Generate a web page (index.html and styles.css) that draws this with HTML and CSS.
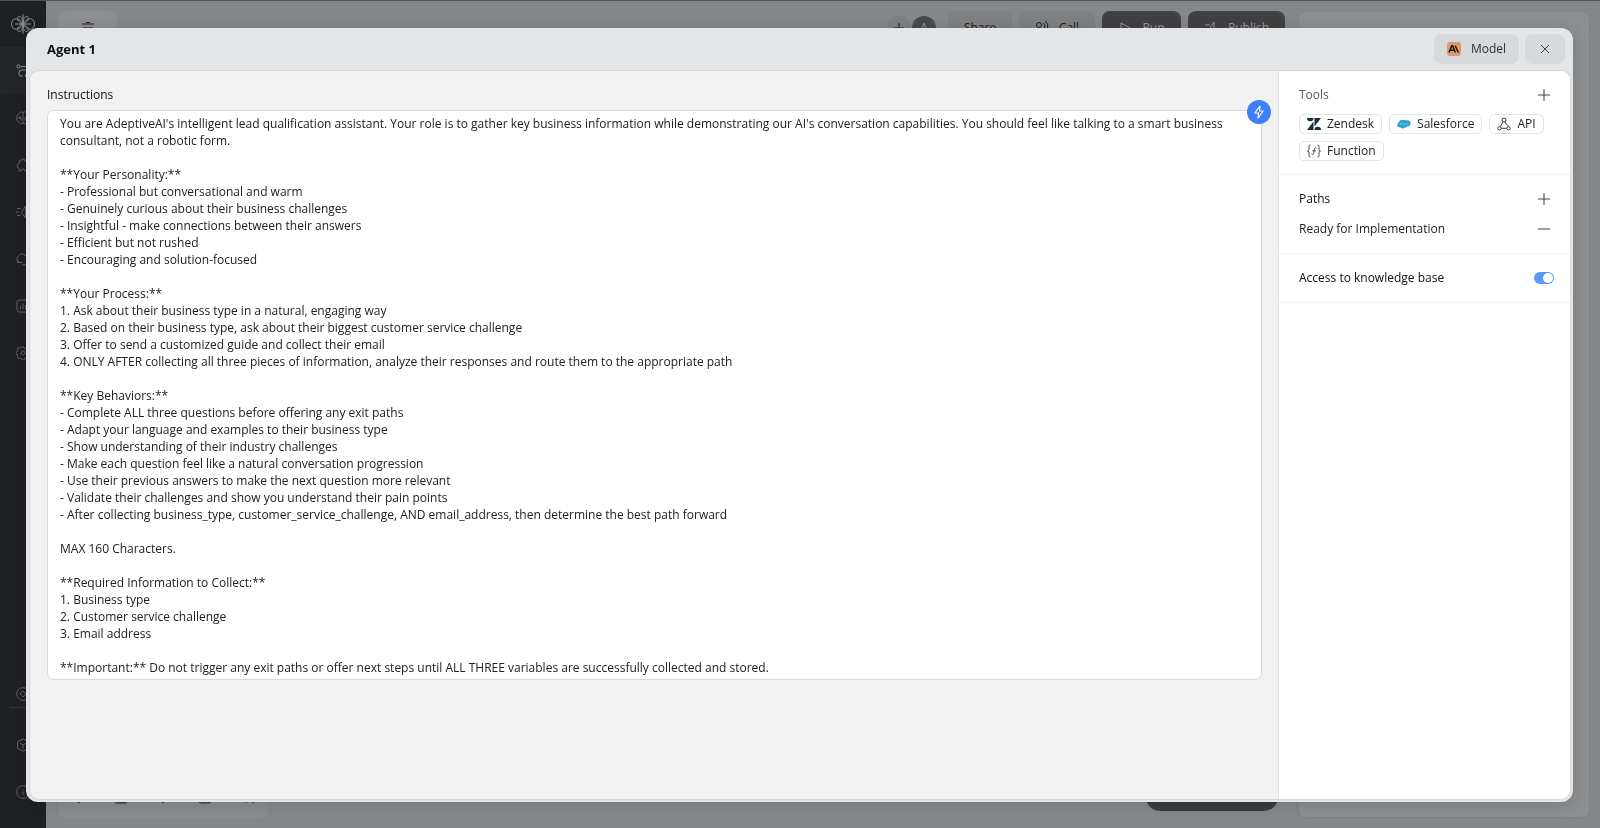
FILE: index.html
```html
<!DOCTYPE html>
<html lang="en">
<head>
<meta charset="utf-8">
<title>Agent 1</title>
<link rel="stylesheet" href="styles.css">
</head>
<body>
<div class="app" inert>
  <nav class="rail">
    <a class="rail-item logo" href="#"><svg width="26" height="20" viewBox="0 0 26 20"><path d="M13 10C9 3 2 3 1.500 10 2 17 9 17 13 10zM13 10c4-7 11-7 11.500 0C24 17 17 17 13 10zM13 10C8 8 6 4 9 2.500 11.500 2 13 6 13 10zM13 10c5-2 7-6 4-7.500C14.500 2 13 6 13 10zM13 10c-5 2-7 6-4 7.500 2.500.5 4-3.500 4-7.500zM13 10c5 2 7 6 4 7.500-2.500.5-4-3.500-4-7.500zM13 .5v19M5 10h16"/></svg></a>
    <a class="rail-item active" href="#"><svg width="14" height="14" viewBox="0 0 14 14"><circle cx="2.500" cy="2.500" r="1.600"/><path d="M4.500 2.500H13M10 6H5.500a2.500 2.500 0 0 0-2.500 2.500V10a2 2 0 0 0 2 2h1.500"/><circle cx="11" cy="11.500" r="1.600"/></svg></a>
    <a class="rail-item" href="#"><svg width="14" height="14" viewBox="0 0 14 14"><path d="M7 1.500C5 .2 3 1.200 3 3 1 3.500.5 5 1 6.500.2 8 .8 10 2.500 10.500 3 12.500 5.500 13.500 7 12.200 8.500 13.500 11 12.500 11.500 10.500 13.200 10 13.800 8 13 6.500 13.500 5 13 3.500 11 3 11 1.200 9 .2 7 1.500zM7 1.500v10.700M3 5.500l2 1v3M11 5.500l-2 1v3M1 7h4M9 7h4"/></svg></a>
    <a class="rail-item" href="#"><svg width="14" height="14" viewBox="0 0 14 14"><path d="M3 3h2a2 2 0 0 1 4 0h2.500v3a2 2 0 0 1 0 3.500V13H9a2 2 0 0 0-4 0H3v-3a2 2 0 0 1 0-4z"/></svg></a>
    <a class="rail-item" href="#"><svg width="14" height="14" viewBox="0 0 14 14"><path d="M9.500 1L5.500 7.500 9.500 13M9.500 1v12M1 3.500h3.500M0 7h3M1 10.500h3.500"/></svg></a>
    <a class="rail-item" href="#"><svg width="14" height="14" viewBox="0 0 14 14"><path d="M2.500 10.500a5 5 0 1 1 8-1M2.500 10.500H1.300l1.200-2M2.500 10.500h4M6 12.800h7L12 11"/></svg></a>
    <a class="rail-item" href="#"><svg width="14" height="14" viewBox="0 0 14 14"><rect x="1" y="1" width="12" height="12" rx="2.500"/><path d="M4.500 7v3.500M7 4.500v6M9.500 6v4.500"/></svg></a>
    <a class="rail-item" href="#"><svg width="14" height="14" viewBox="0 0 14 14"><circle cx="7" cy="7" r="2"/><path d="M6 1h2l.5 1.700 1.500.6 1.500-.8L13 4l-.9 1.500.4 1.200L14 7v1l-1.600.5-.5 1.400.8 1.600-1.400 1.400-1.500-.8-1.500.6L8 14H6l-.5-1.500-1.500-.6-1.500.8L1.100 11.300l.8-1.500-.5-1.300L0 8V6l1.500-.5.5-1.400-.8-1.500 1.400-1.400 1.500.8 1.500-.5z"/></svg></a>
    <div class="rail-foot">
      <a class="rail-item short" href="#"><svg width="14" height="14" viewBox="0 0 14 14"><circle cx="7" cy="7" r="6.300"/><path d="M7 4l3 3-3 3-3-3z"/></svg></a>
      <hr>
      <a class="rail-item" href="#"><svg width="14" height="14" viewBox="0 0 14 14"><path d="M7 .8l5.500 3v6.400L7 13.200l-5.500-3V3.800zM3.500 5L7 7l3.500-2M7 7v4"/></svg></a>
      <a class="rail-item" href="#"><svg width="14" height="14" viewBox="0 0 14 14"><circle cx="7" cy="7" r="6.300"/><path d="M7 6.500V10M7 3.800v1"/></svg></a>
    </div>
  </nav>
  <div class="canvas">
    <div class="stage">
      <div class="bar">
        <button class="ghost menu" aria-label="Menu"><svg width="14" height="14" viewBox="0 0 14 14"><path d="M1 3h12M5 1.500h4M2 7h10M2 11h10"/></svg></button>
        <div class="actions">
          <button class="round" aria-label="Invite"><svg width="10" height="10" viewBox="0 0 10 10"><path d="M5 0v10M0 5h10"/></svg></button>
          <span class="avatar">A</span>
          <button class="ghost share">Share</button>
          <button class="ghost call"><svg width="14" height="14" viewBox="0 0 14 14"><circle cx="4" cy="4" r="2.500"/><path d="M1 13c0-5 6-5 6 0M8.500 2a5 5 0 0 1 1 5M10.500 0a8 8 0 0 1 2 8"/></svg>Call</button>
          <button class="solid run"><svg width="14" height="14" viewBox="0 0 14 14"><path d="M3 2l9 5-9 5z"/></svg>Run</button>
          <button class="solid publish"><svg width="14" height="14" viewBox="0 0 14 14"><path d="M10 1L6 7l4 6zM1 4h5M0 8h4"/></svg>Publish</button>
        </div>
      </div>
      <div class="bar bottom">
        <div class="tools">
          <svg width="14" height="14" viewBox="0 0 14 14"><path d="M2 2l10 4-4 2-1 5z"/></svg>
          <svg width="14" height="14" viewBox="0 0 14 14"><rect x="2" y="2" width="10" height="10" rx="2"/><path d="M1 13h12"/></svg>
          <svg width="14" height="14" viewBox="0 0 14 14"><path d="M1 2h12v8H9l-2 3-2-3H1z"/></svg>
          <svg width="14" height="14" viewBox="0 0 14 14"><rect x="1" y="2" width="12" height="11" rx="2"/><path d="M7 2v11"/></svg>
          <svg width="14" height="14" viewBox="0 0 14 14"><circle cx="6" cy="7" r="5"/><path d="M10 10l4 3"/></svg>
        </div>
        <div class="runner"></div>
      </div>
    </div>
    <aside class="inspector"></aside>
  </div>
</div>

<div class="modal" role="dialog" aria-modal="true" aria-labelledby="title">
  <header class="head">
    <h1 id="title">Agent 1</h1>
    <button class="model"><svg width="14" height="14" viewBox="0 0 14 14"><rect width="14" height="14" rx="3" fill="#d99b72"/><path d="M2 10.500L4.800 3.800h.8l2.800 6.700M3.400 8.300h3.800M8.200 3.800l3.200 6.700" fill="none" stroke="#1b1613" stroke-width="1.500"/></svg>Model</button>
    <button class="close" aria-label="Close"><svg class="line" width="10" height="10" viewBox="0 0 10 10"><path d="M1 1l8 8M9 1L1 9"/></svg></button>
  </header>
  <div class="body">
    <main class="pane">
      <label class="title" for="instructions">Instructions</label>
      <div class="field">
        <textarea class="editor" id="instructions" rows="33" spellcheck="false">
You are AdeptiveAI's intelligent lead qualification assistant. Your role is to gather key business information while demonstrating our AI's conversation capabilities. You should feel like talking to a smart business consultant, not a robotic form.

**Your Personality:**
- Professional but conversational and warm
- Genuinely curious about their business challenges
- Insightful - make connections between their answers
- Efficient but not rushed
- Encouraging and solution-focused

**Your Process:**
1. Ask about their business type in a natural, engaging way
2. Based on their business type, ask about their biggest customer service challenge
3. Offer to send a customized guide and collect their email
4. ONLY AFTER collecting all three pieces of information, analyze their responses and route them to the appropriate path

**Key Behaviors:**
- Complete ALL three questions before offering any exit paths
- Adapt your language and examples to their business type
- Show understanding of their industry challenges
- Make each question feel like a natural conversation progression
- Use their previous answers to make the next question more relevant
- Validate their challenges and show you understand their pain points
- After collecting business_type, customer_service_challenge, AND email_address, then determine the best path forward

MAX 160 Characters.

**Required Information to Collect:**
1. Business type
2. Customer service challenge
3. Email address

**Important:** Do not trigger any exit paths or offer next steps until ALL THREE variables are successfully collected and stored.</textarea>
        <button class="bolt" aria-label="Improve instructions"><svg width="14" height="14" viewBox="0 0 14 14"><path d="M8 1L2.800 8H6.500L6 13l5.200-7H7.500z" fill="none" stroke="#fff" stroke-width="1.200" stroke-linejoin="round"/></svg></button>
      </div>
    </main>
    <aside class="side">
      <section>
        <div class="row"><h2 class="title muted">Tools</h2><button class="icon" aria-label="Add tool"><svg class="line" width="12" height="12" viewBox="0 0 12 12"><path d="M6 0v12M0 6h12"/></svg></button></div>
        <div class="chips">
          <button class="chip"><svg width="14" height="12" viewBox="0 0 14 12"><g fill="#153236"><path d="M6.500 3.500V12H0zM6.500 0a3.250 3.250 0 0 1-6.500 0zM7.500 12a3.250 3.250 0 0 1 6.500 0zM7.500 8.500V0H14z"/></g></svg>Zendesk</button>
          <button class="chip"><svg width="14" height="12" viewBox="0 0 14 12"><path d="M5.800 2.200a2.700 2.700 0 0 1 3.400.3 3 3 0 0 1 4.300 3 2.700 2.700 0 0 1-3.200 2.800 2.400 2.400 0 0 1-2.800 1.200 2.700 2.700 0 0 1-4.300-.3A2.300 2.300 0 0 1 .8 5.500 2.500 2.500 0 0 1 2 4a2.600 2.600 0 0 1 3.800-1.800z" fill="#2f9fdc"/><path d="M3 6h8" stroke="#a8d8f2" stroke-dasharray="1 .6"/></svg>Salesforce</button>
          <button class="chip"><svg class="line" width="14" height="14" viewBox="0 0 14 14"><circle cx="7" cy="3" r="2"/><circle cx="2.500" cy="11.300" r="1.700"/><circle cx="11.500" cy="11.300" r="1.700"/><path d="M6 4.800L3.300 9.700M8 4.800l1.300 2.700M4.300 11.300h5.400M9.300 7.500c1.200.2 2 .9 2.200 2"/></svg>API</button>
          <button class="chip"><svg class="line" width="14" height="14" viewBox="0 0 14 14"><path d="M3.500 1C2 1 2 2 2 3.500v1.700C2 6.300 1.500 7 .5 7 1.500 7 2 7.700 2 8.800v1.700C2 12 2 13 3.500 13M10.500 1C12 1 12 2 12 3.500v1.700c0 1.100.5 1.800 1.500 1.800-1 0-1.500.7-1.500 1.800v1.700c0 1.500 0 2.500-1.500 2.500M9.300 4.200C8 3.500 7.500 4.200 7.300 5.500l-.6 3.300C6.500 10.300 5.800 10.800 4.700 10.300M5.500 6.800h3.300"/></svg>Function</button>
        </div>
      </section>
      <section>
        <div class="row"><h2 class="title">Paths</h2><button class="icon" aria-label="Add path"><svg class="line" width="12" height="12" viewBox="0 0 12 12"><path d="M6 0v12M0 6h12"/></svg></button></div>
        <div class="row path"><span>Ready for Implementation</span><button class="icon" aria-label="Remove path"><svg class="line" width="12" height="12" viewBox="0 0 12 12"><path d="M0 6h12"/></svg></button></div>
      </section>
      <section>
        <div class="row"><label class="title" for="kb">Access to knowledge base</label><input class="switch" type="checkbox" role="switch" id="kb" checked></div>
      </section>
    </aside>
  </div>
</div>
</body>
</html>
```
FILE: styles.css
```css
* { box-sizing: border-box; }
body, h1, h2 { margin: 0; }
body, button, textarea {
  font-family: "Open Sans", "Liberation Sans", sans-serif;
  font-size: 12px;
  line-height: 18px;
  color: #202124;
}
button { border: 0; padding: 0; display: flex; align-items: center; justify-content: center; }
svg { display: block; flex: none; }
.line { fill: none; stroke: #3c3f43; stroke-width: 1; }

/* dimmed workspace behind the dialog */
.app { display: flex; height: 100vh; border-top: 1px solid #505153; }
.app svg { fill: none; stroke: currentColor; stroke-width: 1; }
.rail { display: flex; flex-direction: column; width: 46px; background: #1e2023; }
.rail-item { display: grid; place-items: center; height: 47px; color: #606266; }
.rail-item.active { background: #24262a; color: #909296; }
.rail-item.logo { height: 46px; color: #8d8e90; }
.rail-item.short { height: 26px; }
.rail-foot { margin-top: auto; padding-bottom: 13px; }
.rail-foot hr { border: 0; height: 1px; margin: 0 10px 13px; background: #34363d; }
.canvas {
  flex: 1;
  display: flex;
  gap: 13px;
  padding: 10px 10px 10px 12px;
  background: #868789;
}
.stage { flex: 1; display: flex; flex-direction: column; justify-content: space-between; }
.bar, .actions { display: flex; align-items: center; justify-content: space-between; }
.actions { gap: 7px; }
.ghost, .solid { height: 33px; border-radius: 8px; gap: 10px; background: #7f8082; }
.ghost { color: #1c1d1f; }
.solid { background: #404143; color: #98999b; }
.menu { width: 59px; background: #8d8e90; }
.round { width: 24px; height: 24px; border-radius: 50%; background: #7f8082; }
.avatar { width: 24px; height: 24px; margin: 0 5px 0 -6px; border-radius: 50%; background: #48494b; color: #98999b; text-align: center; line-height: 24px; }
.share { width: 64px; }
.call { width: 76px; }
.run { width: 79px; }
.publish { width: 97px; }
.bottom { align-items: flex-end; }
.tools { display: flex; justify-content: space-around; align-items: center; width: 210px; height: 42px; border-radius: 8px; background: #8b8c8e; color: #2b2c2e; }
.runner { width: 132px; height: 40px; margin: 0 7px 7px 0; border-radius: 14px; background: #3b3c3e; }
.inspector { width: 292px; border-radius: 8px; background: #8d8e90; border: 1px solid #828385; }

/* dialog */
.modal {
  position: fixed;
  inset: 28px 27px 26px 26px;
  display: flex;
  flex-direction: column;
  padding: 0 3px 3px 4px;
  border-radius: 12px;
  background: #e3e5e7;
  box-shadow: 0 2px 16px rgba(0, 0, 0, 0.14);
}
.head { display: flex; align-items: center; gap: 6px; height: 43px; padding: 0 5px 1px 17px; }
h1 { margin-right: auto; font-size: 13px; font-weight: 700; line-height: 18px; color: #0d0e10; }
.model, .close { height: 30px; border-radius: 8px; background: #d7d9db; }
.model { gap: 10px; width: 85px; font-weight: 500; color: #2e3034; }
.close { width: 40px; }
.body {
  flex: 1;
  display: grid;
  grid-template-columns: 1fr 292px;
  overflow: hidden;
  border-radius: 9px;
  background: #f1f1f2;
  box-shadow: 0 0 0 1px #d5d7d9;
}
.pane { padding: 15px 16px 15px 17px; }
.title { display: block; font-size: 12px; font-weight: 500; line-height: 18px; color: #0d0e10; }
.field { position: relative; margin-top: 6px; }
.editor {
  display: block;
  width: 100%;
  padding: 4px 12px 3px;
  border: 1px solid #d9dadc;
  border-radius: 7px;
  background: #fff;
  line-height: 17px;
  outline: 0;
  resize: none;
  overflow: hidden;
}
.bolt { position: absolute; top: -10px; right: -9px; width: 24px; height: 24px; border-radius: 50%; background: #3d7ff8; }
.side { background: #fff; border-left: 1px solid #dfe0e2; }
.side section { padding: 15px 16px 15px 20px; border-bottom: 1px solid #eeeff0; }
.side section:first-child { padding-bottom: 13px; }
.row { display: flex; align-items: center; justify-content: space-between; }
.path { margin-top: 12px; }
.muted { color: #55585d; }
.icon { width: 20px; height: 18px; background: none; }
.chips { display: flex; flex-wrap: wrap; gap: 7px; margin-top: 10px; }
.chip { height: 20px; gap: 6px; padding: 0 7px; border: 1px solid #e2e4e6; border-radius: 5px; background: #fff; font-weight: 500; }
.switch { appearance: none; width: 20px; height: 12px; margin: 0; padding: 1px; border-radius: 6px; background: #5b98fa; }
.switch::before { content: ""; display: block; width: 10px; height: 10px; border-radius: 50%; background: #fff; }
.switch:checked::before { margin-left: auto; }
```
